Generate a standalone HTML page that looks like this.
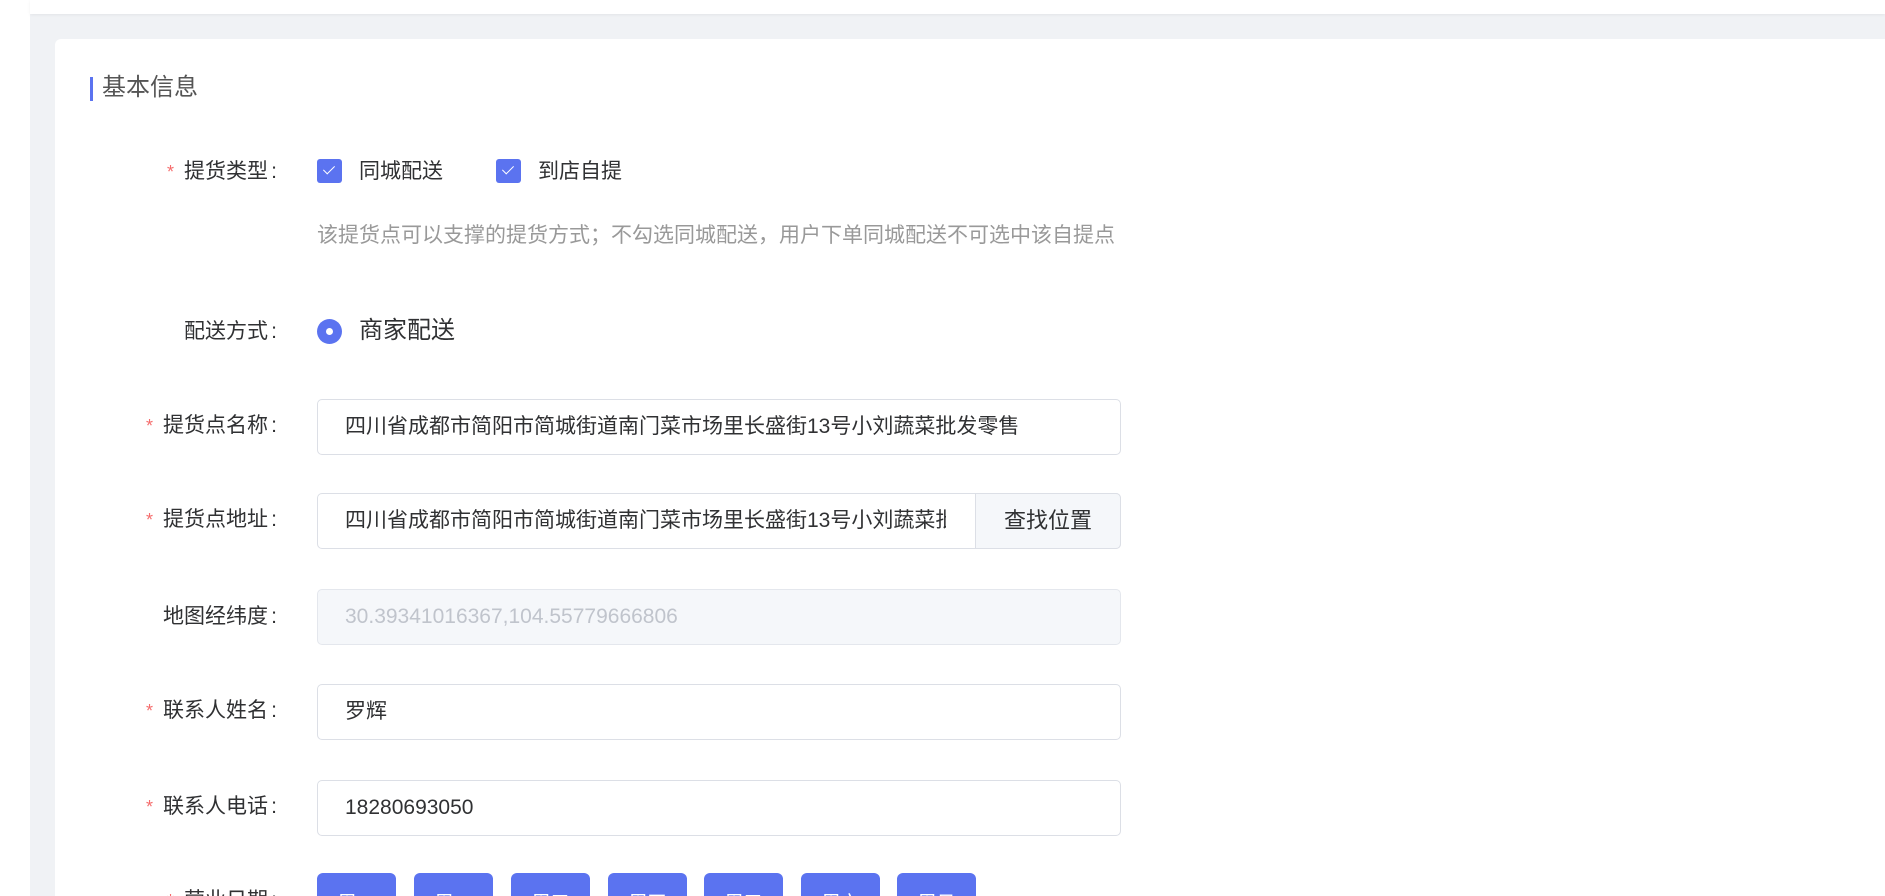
<!DOCTYPE html>
<html><head><meta charset="utf-8"><style>
*{margin:0;padding:0;box-sizing:border-box}
html,body{width:1885px;height:896px;overflow:hidden}
body{background:#f0f2f5;font-family:"Liberation Sans","Noto Sans CJK SC",sans-serif;position:relative;color:#303133}
.side{position:absolute;left:0;top:0;width:30px;height:896px;background:#fff}
.top{position:absolute;left:30px;top:0;right:0;height:14px;background:#fff;box-shadow:0 1px 3px rgba(0,0,0,.06)}
.card{position:absolute;left:55px;top:39px;width:1830px;height:857px;background:#fff;border-radius:6px 0 0 0}
.abs{position:absolute}
.bar{left:90px;top:77px;width:3px;height:24px;background:#5b73f0}
.title{left:102px;top:73px;font-size:24px;color:#555;line-height:30px}
.lab{position:absolute;right:1605px;font-size:21px;line-height:28px;color:#303133;white-space:nowrap}
.lab i{font-style:normal;color:#f56c6c;margin-right:10px;font-size:18px}
.lab b{font-weight:normal;display:inline-block;width:12px;text-align:center}
.cb{position:absolute;width:25px;height:24px;background:#5b73f0;border-radius:3px}
.cb:after{content:"";position:absolute;left:9px;top:4px;width:5px;height:10px;border:solid #fff;border-width:0 1.5px 1.5px 0;transform:rotate(45deg)}
.txt{position:absolute;font-size:21px;line-height:28px;color:#303133;white-space:nowrap}
.inp{position:absolute;left:317px;width:804px;height:56px;border:1px solid #dcdfe6;border-radius:5px;background:#fff;font-size:21px;line-height:54px;padding-left:27px;color:#303133;white-space:nowrap;overflow:hidden}
.btn{position:absolute;top:873px;width:79px;height:40px;background:#5b73f0;border-radius:6px;color:#fff;font-size:19px;text-align:center;line-height:62px}
</style></head><body>
<div class="side"></div><div class="top"></div>
<div class="card"></div>
<div class="abs bar"></div><div class="abs title">基本信息</div>

<div class="lab" style="top:158px"><i>*</i>提货类型<b>:</b></div>
<div class="cb" style="left:317px;top:159px"></div><div class="txt" style="left:359px;top:158px">同城配送</div>
<div class="cb" style="left:496px;top:159px"></div><div class="txt" style="left:538px;top:158px">到店自提</div>
<div class="txt" style="left:317px;top:222px;color:#999">该提货点可以支撑的提货方式；不勾选同城配送，用户下单同城配送不可选中该自提点</div>

<div class="lab" style="top:318px">配送方式<b>:</b></div>
<div class="abs" style="left:317px;top:319px;width:25px;height:25px;border-radius:50%;background:#5b73f0"><div style="position:absolute;left:9px;top:9px;width:7px;height:7px;border-radius:50%;background:#fff"></div></div>
<div class="txt" style="left:359px;top:316px;font-size:24px;line-height:30px">商家配送</div>

<div class="lab" style="top:412px"><i>*</i>提货点名称<b>:</b></div>
<div class="inp" style="top:399px">四川省成都市简阳市简城街道南门菜市场里长盛街13号小刘蔬菜批发零售</div>

<div class="lab" style="top:506px"><i>*</i>提货点地址<b>:</b></div>
<div class="inp" style="top:493px"><div style="width:601px;overflow:hidden">四川省成都市简阳市简城街道南门菜市场里长盛街13号小刘蔬菜批发零售</div></div>
<div class="abs" style="left:975px;top:493px;width:146px;height:56px;background:#f5f7fa;border:1px solid #dcdfe6;border-radius:0 5px 5px 0;font-size:22px;line-height:54px;text-align:center;color:#303133">查找位置</div>

<div class="lab" style="top:603px">地图经纬度<b>:</b></div>
<div class="inp" style="top:589px;background:#f5f7fa;border-color:#e4e7ed;color:#c0c4cc">30.39341016367,104.55779666806</div>

<div class="lab" style="top:697px"><i>*</i>联系人姓名<b>:</b></div>
<div class="inp" style="top:684px">罗辉</div>

<div class="lab" style="top:793px"><i>*</i>联系人电话<b>:</b></div>
<div class="inp" style="top:780px">18280693050</div>

<div class="lab" style="top:887px"><i>*</i>营业日期<b>:</b></div>
<div class="btn" style="left:317px">周一</div>
<div class="btn" style="left:414px">周二</div>
<div class="btn" style="left:511px">周三</div>
<div class="btn" style="left:608px">周四</div>
<div class="btn" style="left:704px">周五</div>
<div class="btn" style="left:801px">周六</div>
<div class="btn" style="left:897px">周日</div>
</body></html>
